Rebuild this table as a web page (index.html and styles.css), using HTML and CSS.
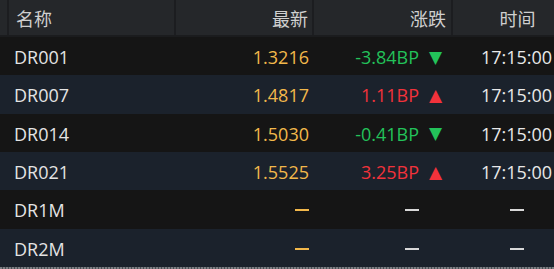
FILE: index.html
```html
<!DOCTYPE html>
<html lang="zh">
<head>
<meta charset="utf-8">
<link rel="stylesheet" href="styles.css">
</head>
<body>
<div class="viewport">
  <div class="table">
    <div class="row head">
      <div class="cell lead"></div>
      <div class="cell name">名称</div>
      <div class="cell price">最新</div>
      <div class="cell chg">涨跌</div>
      <div class="cell time">时间</div>
    </div>
    <div class="row odd">
      <div class="cell lead"></div>
      <div class="cell name">DR001</div>
      <div class="cell price">1.3216</div>
      <div class="cell chg down"><span class="val">-3.84BP</span><span class="tri">▼</span></div>
      <div class="cell time">17:15:00</div>
    </div>
    <div class="row even">
      <div class="cell lead"></div>
      <div class="cell name">DR007</div>
      <div class="cell price">1.4817</div>
      <div class="cell chg up"><span class="val">1.11BP</span><span class="tri">▲</span></div>
      <div class="cell time">17:15:00</div>
    </div>
    <div class="row odd">
      <div class="cell lead"></div>
      <div class="cell name">DR014</div>
      <div class="cell price">1.5030</div>
      <div class="cell chg down"><span class="val">-0.41BP</span><span class="tri">▼</span></div>
      <div class="cell time">17:15:00</div>
    </div>
    <div class="row even">
      <div class="cell lead"></div>
      <div class="cell name">DR021</div>
      <div class="cell price">1.5525</div>
      <div class="cell chg up"><span class="val">3.25BP</span><span class="tri">▲</span></div>
      <div class="cell time">17:15:00</div>
    </div>
    <div class="row odd">
      <div class="cell lead"></div>
      <div class="cell name">DR1M</div>
      <div class="cell price"><span class="dash dash-price"></span></div>
      <div class="cell chg"><span class="val"><span class="dash"></span></span><span class="tri"></span></div>
      <div class="cell time"><span class="dash"></span></div>
    </div>
    <div class="row even">
      <div class="cell lead"></div>
      <div class="cell name">DR2M</div>
      <div class="cell price"><span class="dash dash-price"></span></div>
      <div class="cell chg"><span class="val"><span class="dash"></span></span><span class="tri"></span></div>
      <div class="cell time"><span class="dash"></span></div>
    </div>
  </div>
  <div class="foot"></div>
</div>
</body>
</html>
```

FILE: styles.css
```css
html, body {
  margin: 0;
  padding: 0;
  background: #151515;
}
.viewport {
  width: 554px;
  height: 269px;
  overflow: hidden;
  display: flex;
  flex-direction: column;
  font-family: "Open Sans", "Noto Sans CJK SC", sans-serif;
  font-size: 18px;
}
.table {
  width: 580px;
  display: flex;
  flex-direction: column;
}
.row {
  display: grid;
  grid-template-columns: 7px 167px 138px 139px 129px;
  height: 38.33px;
  align-items: center;
  box-sizing: border-box;
  padding-top: 2px;
}
.row.head {
  height: 37px;
  padding-top: 0;
  background: #25272a;
  border-bottom: 2px solid #1b1c1e;
  align-items: stretch;
}
.row.odd { background: #151515; }
.row.even { background: #1b222c; }
.cell {
  white-space: nowrap;
  display: flex;
  align-items: center;
}
.head .cell {
  color: #cfcfcf;
  font-size: 18px;
  border-left: 2px solid #1c1d20;
  padding-top: 1px;
}
.head .cell.lead { border-left: none; }
.head .cell.name { padding-left: 7px; }
.head .cell.price { justify-content: flex-end; padding-right: 4px; }
.head .cell.chg { justify-content: flex-end; padding-right: 5px; }
.head .cell.time { justify-content: center; }
.name { color: #e4e4e4; padding-left: 7px; }
.price { color: #f2b84b; justify-content: flex-end; padding-right: 3px; }
.chg { justify-content: flex-end; padding-right: 8px; }
.chg .val { display: flex; justify-content: flex-end; }
.chg .tri {
  width: 14px;
  margin-left: 10px;
  font-family: "DejaVu Sans", sans-serif;
  font-size: 17px;
  line-height: 1;
}
.down { color: #23c25a; }
.up { color: #f2323b; }
.time { color: #e8e8e8; justify-content: center; padding-left: 2px; }
.dash {
  display: inline-block;
  width: 14px;
  height: 2px;
  background: #d8d8d8;
}
.dash-price { background: #f2b84b; }
.foot {
  height: 2px;
  margin-top: auto;
  background: repeating-linear-gradient(90deg, #7c7f84 0 2px, #4a4d52 2px 3px);
}
```
